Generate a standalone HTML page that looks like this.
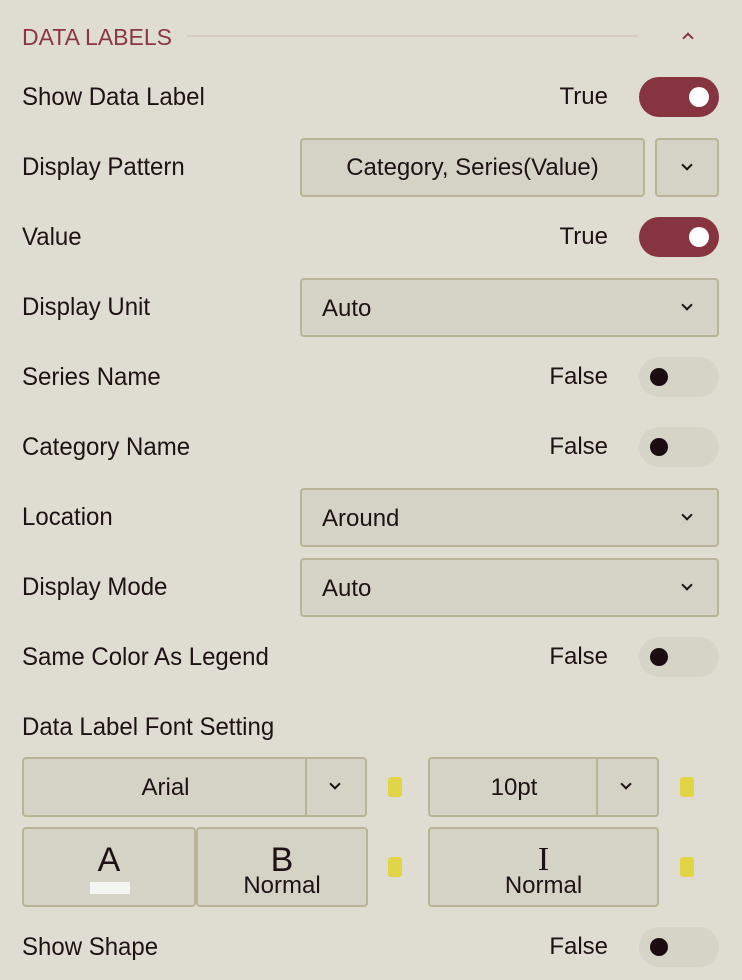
<!DOCTYPE html>
<html><head><style>
*{box-sizing:border-box;margin:0;padding:0}
body{width:742px;height:980px;background:#dfddd1;font-family:"Liberation Sans",sans-serif;color:#1e1214;position:relative;overflow:hidden}
.a{position:absolute}
.lbl{position:absolute;left:22px;font-size:24px;line-height:26px;transform:scaleY(1.03)}
.val{position:absolute;font-size:24px;line-height:26px;right:134px;text-align:right}
.tg{position:absolute;left:639px;width:80px;height:40px;border-radius:20px;background:#d6d4c7}
.tg.on{background:#853440}
.tg i{position:absolute;top:11px;left:11px;width:18px;height:18px;border-radius:50%;background:#1a0c10}
.tg.on i{left:50px;top:10px;width:20px;height:20px;background:#fff}
.box{position:absolute;background:#d5d3c5;border:2px solid #b9b495;border-radius:4px;font-size:24px}
.chev{position:absolute;width:8px;height:8px;border-right:2px solid #1e1214;border-bottom:2px solid #1e1214;transform:rotate(45deg)}
.sq{position:absolute;width:14px;height:20px;border-radius:3px;background:#e1d545}
</style></head><body>
<div class="a" style="left:22px;top:23px;font-size:23px;line-height:28px;color:#8a3743">DATA LABELS</div>
<div class="a" style="left:187px;top:35px;width:451px;height:2px;background:#d6cdc2"></div>
<div class="chev" style="left:684px;top:34px;transform:rotate(-135deg);border-color:#8a3743"></div>

<div class="lbl" style="top:85px">Show Data Label</div>
<div class="val" style="top:84px">True</div>
<div class="tg on" style="top:77px"><i></i></div>

<div class="lbl" style="top:155px">Display Pattern</div>
<div class="box" style="left:300px;top:138px;width:345px;height:59px;text-align:center;line-height:55px">Category, Series(Value)</div>
<div class="box" style="left:655px;top:138px;width:64px;height:59px"><div class="chev" style="left:26px;top:21px"></div></div>

<div class="lbl" style="top:225px">Value</div>
<div class="val" style="top:224px">True</div>
<div class="tg on" style="top:217px"><i></i></div>

<div class="lbl" style="top:295px">Display Unit</div>
<div class="box" style="left:300px;top:278px;width:419px;height:59px;line-height:57px;padding-left:20px">Auto<div class="chev" style="left:381px;top:21px"></div></div>

<div class="lbl" style="top:365px">Series Name</div>
<div class="val" style="top:364px">False</div>
<div class="tg" style="top:357px"><i></i></div>

<div class="lbl" style="top:435px">Category Name</div>
<div class="val" style="top:434px">False</div>
<div class="tg" style="top:427px"><i></i></div>

<div class="lbl" style="top:505px">Location</div>
<div class="box" style="left:300px;top:488px;width:419px;height:59px;line-height:57px;padding-left:20px">Around<div class="chev" style="left:381px;top:21px"></div></div>

<div class="lbl" style="top:575px">Display Mode</div>
<div class="box" style="left:300px;top:558px;width:419px;height:59px;line-height:57px;padding-left:20px">Auto<div class="chev" style="left:381px;top:21px"></div></div>

<div class="lbl" style="top:645px">Same Color As Legend</div>
<div class="val" style="top:644px">False</div>
<div class="tg" style="top:637px"><i></i></div>

<div class="lbl" style="top:715px">Data Label Font Setting</div>

<div class="box" style="left:22px;top:757px;width:345px;height:60px;line-height:58px"><div style="position:absolute;left:0;width:283px;text-align:center">Arial</div><div class="a" style="left:281px;top:0;width:2px;height:56px;background:#b9b495"></div><div class="chev" style="left:307px;top:21px"></div></div>
<div class="sq" style="left:388px;top:777px"></div>
<div class="box" style="left:428px;top:757px;width:231px;height:60px;line-height:58px"><div style="position:absolute;left:0;width:168px;text-align:center">10pt</div><div class="a" style="left:166px;top:0;width:2px;height:56px;background:#b9b495"></div><div class="chev" style="left:192px;top:21px"></div></div>
<div class="sq" style="left:680px;top:777px"></div>

<div class="box" style="left:22px;top:827px;width:174px;height:80px;text-align:center"><div style="font-size:34px;line-height:34px;margin-top:14px">A</div><div class="a" style="left:66px;top:53px;width:40px;height:12px;background:#f3f6f3"></div></div>
<div class="box" style="left:196px;top:827px;width:172px;height:80px;text-align:center"><div style="font-size:34px;line-height:34px;margin-top:14px">B</div><div style="line-height:22px;margin-top:-2px">Normal</div></div>
<div class="sq" style="left:388px;top:857px"></div>
<div class="box" style="left:428px;top:827px;width:231px;height:80px;text-align:center"><div style="font-size:34px;line-height:34px;margin-top:14px;font-family:'Liberation Serif',serif">I</div><div style="line-height:22px;margin-top:-2px">Normal</div></div>
<div class="sq" style="left:680px;top:857px"></div>

<div class="lbl" style="top:935px">Show Shape</div>
<div class="val" style="top:934px">False</div>
<div class="tg" style="top:927px"><i></i></div>
</body></html>
